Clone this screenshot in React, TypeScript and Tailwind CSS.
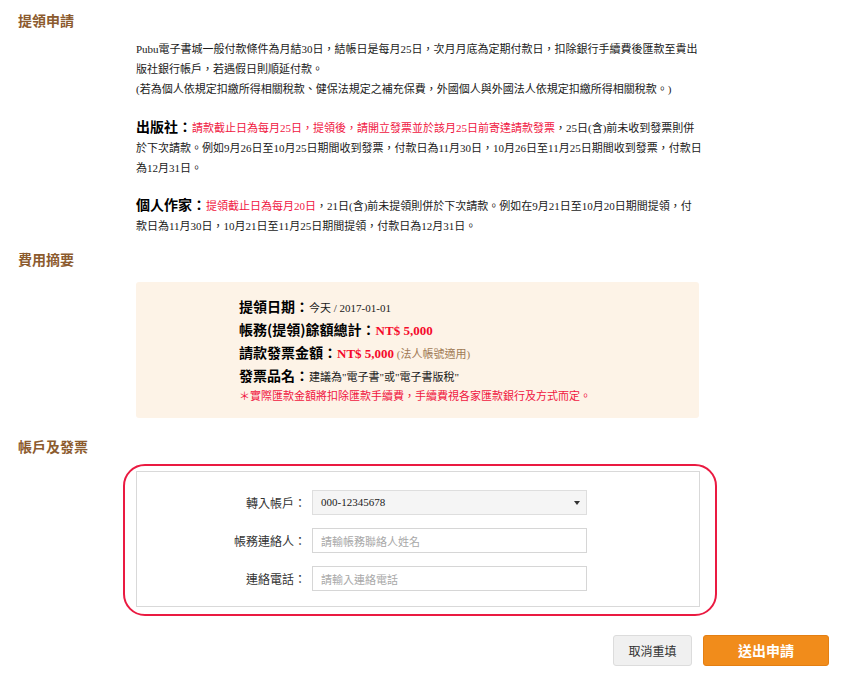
import React from "react";

const FONT = { fontFamily: '"Liberation Serif", "Noto Sans CJK TC", serif' };
const CJK = { fontFamily: '"Noto Sans CJK TC", "Liberation Serif", sans-serif' };

const SectionTitle = ({ children, className = "" }: { children: React.ReactNode; className?: string }) => (
  <h2 className={`pl-[18px] text-[14px] leading-[20px] font-bold text-[#8c5b2e] ${className}`} style={CJK}>
    {children}
  </h2>
);

const Red = ({ children }: { children: React.ReactNode }) => (
  <span className="text-[#f0163f]">{children}</span>
);

const Lead = ({ children }: { children: React.ReactNode }) => (
  <span className="text-[14px] leading-[14px] font-bold text-black" style={CJK}>
    {children}
  </span>
);

const App = () => {
  return (
    <div className="w-[844px] h-[689px] bg-white text-[#1a1a1a]" style={FONT}>
      <div className="pt-[10px]">
        {/* 提領申請 */}
        <SectionTitle>提領申請</SectionTitle>
        <div className="ml-[136px] mt-[9px] w-[568px] text-[11px] leading-[20px] whitespace-nowrap">
          <p>
            Pubu電子書城一般付款條件為月結30日，結帳日是每月25日，次月月底為定期付款日，扣除銀行手續費後匯款至貴出
            <br />
            版社銀行帳戶，若遇假日則順延付款。
            <br />
            (若為個人依規定扣繳所得相關稅款、健保法規定之補充保費，外國個人與外國法人依規定扣繳所得相關稅款。)
          </p>
          <p className="mt-[19px]">
            <Lead>出版社：</Lead>
            <Red>請款截止日為每月25日，提領後，請開立發票並於該月25日前寄達請款發票</Red>，25日(含)前未收到發票則併
            <br />
            於下次請款。例如9月26日至10月25日期間收到發票，付款日為11月30日，10月26日至11月25日期間收到發票，付款日
            <br />
            為12月31日。
          </p>
          <p className="mt-[18px]">
            <Lead>個人作家：</Lead>
            <Red>提領截止日為每月20日</Red>，21日(含)前未提領則併於下次請款。例如在9月21日至10月20日期間提領，付
            <br />
            款日為11月30日，10月21日至11月25日期間提領，付款日為12月31日。
          </p>
        </div>

        {/* 費用摘要 */}
        <SectionTitle className="mt-[13px]">費用摘要</SectionTitle>
        <div className="ml-[136px] mt-[13px] w-[563px] rounded-[3px] bg-[#fdf3e7] pl-[103px] pt-[13px] pb-[13px]">
          <div className="h-[23px] leading-[23px] text-[14px] font-bold text-black">
            <span style={CJK}>提領日期：</span>
            <span className="text-[11px] font-normal text-[#1a1a1a]">今天 / 2017-01-01</span>
          </div>
          <div className="h-[23px] leading-[23px] text-[14px] font-bold text-black">
            <span style={CJK}>帳務(提領)餘額總計：</span>
            <span className="text-[13px] text-[#f50a2b]">NT$ 5,000</span>
          </div>
          <div className="h-[23px] leading-[23px] text-[14px] font-bold text-black">
            <span style={CJK}>請款發票金額：</span>
            <span className="text-[13px] text-[#f50a2b]">NT$ 5,000</span>
            <span className="text-[11px] font-normal text-[#a07a55]"> (法人帳號適用)</span>
          </div>
          <div className="h-[23px] leading-[23px] text-[14px] font-bold text-black">
            <span style={CJK}>發票品名：</span>
            <span className="text-[11px] font-normal text-[#1a1a1a]">建議為"電子書"或"電子書版稅"</span>
          </div>
          <div className="h-[18px] leading-[18px] text-[11px] text-[#f0163f]">＊實際匯款金額將扣除匯款手續費，手續費視各家匯款銀行及方式而定。</div>
        </div>

        {/* 帳戶及發票 */}
        <SectionTitle className="mt-[18px]">帳戶及發票</SectionTitle>
        <div className="relative ml-[136px] mt-[15px] w-[564px]">
          <div className="border border-[#d9d9d9] pt-[18px] pb-[15px]">
            <div className="grid grid-cols-[169px_275px] gap-x-[6px] gap-y-[13px] items-center text-[12px] text-[#333]">
              <label className="text-right" style={CJK}>轉入帳戶：</label>
              <div className="flex h-[25px] items-center justify-between border border-[#dedede] bg-[#f5f5f5] pl-[8px] pr-[6px] text-[11px] text-[#1a1a1a]">
                <span>000-12345678</span>
                <span className="h-0 w-0 border-x-[3.5px] border-t-[4px] border-x-transparent border-t-[#333]" />
              </div>
              <label className="text-right" style={CJK}>帳務連絡人：</label>
              <input
                className="h-[25px] border border-[#d6d6d6] bg-white px-[8px] text-[11px] outline-none placeholder:text-[#a8a8a8]"
                style={CJK}
                placeholder="請輸帳務聯絡人姓名"
              />
              <label className="text-right" style={CJK}>連絡電話：</label>
              <input
                className="h-[25px] border border-[#d6d6d6] bg-white px-[8px] text-[11px] outline-none placeholder:text-[#a8a8a8]"
                style={CJK}
                placeholder="請輸入連絡電話"
              />
            </div>
          </div>
          {/* 紅色標示框 */}
          <div className="pointer-events-none absolute -left-[13px] -right-[17px] -top-[7px] -bottom-[9px] rounded-[22px] border-2 border-[#ea1a41]" />
        </div>

        <div className="mt-[28px] mr-[15px] flex justify-end gap-[11px]" style={CJK}>
          <button className="h-[31px] w-[79px] rounded-[3px] border border-[#dcdcdc] bg-[#f0f0f0] text-[12px] text-[#333]">
            取消重填
          </button>
          <button className="h-[31px] w-[126px] rounded-[3px] border border-[#e47f12] bg-[#f18c1b] text-[14px] font-bold text-white">
            送出申請
          </button>
        </div>
      </div>
    </div>
  );
};

export default App;
